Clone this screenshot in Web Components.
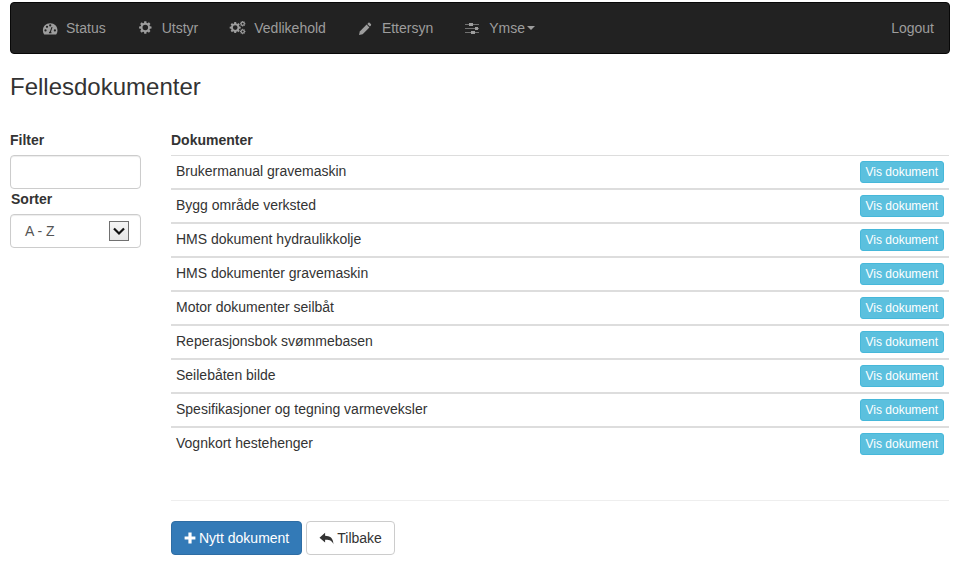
<!DOCTYPE html>
<html>
<head>
<meta charset="utf-8">
<title>Fellesdokumenter</title>
<style>
  html, body { margin: 0; padding: 0; background: #fff; }
  body { font-family: "Liberation Sans", Arial, sans-serif; font-size: 14px; line-height: 20px; color: #333; }
</style>
</head>
<body>
<app-page>
  <top-nav>
    <nav-link icon="dashboard">Status</nav-link>
    <nav-link icon="cog">Utstyr</nav-link>
    <nav-link icon="cogs">Vedlikehold</nav-link>
    <nav-link icon="pencil">Ettersyn</nav-link>
    <nav-link icon="sliders" caret>Ymse</nav-link>
    <nav-link slot="right">Logout</nav-link>
  </top-nav>
  <page-title>Fellesdokumenter</page-title>
  <two-col>
    <filter-panel slot="side"></filter-panel>
    <doc-list>
      <doc-row>Brukermanual gravemaskin</doc-row>
      <doc-row>Bygg område verksted</doc-row>
      <doc-row>HMS dokument hydraulikkolje</doc-row>
      <doc-row>HMS dokumenter gravemaskin</doc-row>
      <doc-row>Motor dokumenter seilbåt</doc-row>
      <doc-row>Reperasjonsbok svømmebasen</doc-row>
      <doc-row>Seilebåten bilde</doc-row>
      <doc-row>Spesifikasjoner og tegning varmeveksler</doc-row>
      <doc-row>Vognkort hestehenger</doc-row>
    </doc-list>
  </two-col>
</app-page>

<script>
// gear outline for the cog icons, r is the outer radius, hole the bore as a share of r
function gearPath(cx, cy, r, hole) {
  let d = '';
  const teeth = 8;
  for (let i = 0; i < teeth; i++) {
    const a = (i / teeth) * Math.PI * 2;
    const w = Math.PI / teeth * 0.55;
    const pts = [[a - w * 1.25, 0.76], [a - w * 0.8, 1], [a + w * 0.8, 1], [a + w * 1.25, 0.76]];
    pts.forEach((p, j) => {
      const x = (cx + Math.cos(p[0]) * p[1] * r).toFixed(2);
      const y = (cy + Math.sin(p[0]) * p[1] * r).toFixed(2);
      d += (i === 0 && j === 0 ? 'M' : 'L') + x + ' ' + y;
    });
  }
  d += 'Z';
  const h = r * hole;
  d += `M${cx - h} ${cy}a${h} ${h} 0 1 0 ${h * 2} 0a${h} ${h} 0 1 0 ${-h * 2} 0Z`;
  return d;
}

// nav icons share a 26x14 box, drawn where the glyph sits in front of the label
const navIcon = inner => `<svg width="26" height="14" viewBox="0 0 26 14" fill="currentColor">${inner}</svg>`;

const ICONS = {
  dashboard: navIcon(`<path transform="translate(2.200 1)" fill-rule="evenodd" d="M8 1.200C3.800 1.200.7 4.300.7 8.400c0 1.500.4 2.700 1.100 3.800.2.300.5.400.8.400h10.800c.3 0 .6-.1.800-.4.700-1.100 1.100-2.300 1.100-3.800 0-4.100-3.100-7.200-7.300-7.200zM3.300 9.500a1.100 1.100 0 1 1 0-2.200 1.100 1.100 0 0 1 0 2.200zm1.500-3.600a1.100 1.100 0 1 1 0-2.200 1.100 1.100 0 0 1 0 2.200zM8 4.500A1.100 1.100 0 1 1 8 2.300a1.100 1.100 0 0 1 0 2.200zm1.300 6.800H6.700c0-.9.500-1.500 1-1.700l1.500-4.300c.1-.3.400-.4.700-.3.300.1.400.4.300.7L8.800 9.600c.3.300.5.900.5 1.700zm3.400-1.800a1.100 1.100 0 1 1 0-2.200 1.100 1.100 0 0 1 0 2.200z"/>`),
  cog: navIcon(`<path fill-rule="evenodd" d="${gearPath(9.3, 6.5, 6.3, 0.44)}"/>`),
  cogs: navIcon(`<path fill-rule="evenodd" d="${gearPath(7.200, 6.600, 5.600, 0.42)}${gearPath(14.700, 2.700, 2.800, 0.36)}${gearPath(14.700, 10.500, 2.800, 0.36)}"/>`),
  pencil: navIcon(`<path d="M3 14l.8-3.600L10.600 3.600l2.800 2.800L6.600 13.200z"/><path d="M11.300 2.900l1-1c.4-.4 1-.4 1.400 0l1.200 1.200c.4.400.4 1 0 1.400l-1 1z"/>`),
  sliders: navIcon(`<path opacity=".65" d="M2 3h14v1H2zM2 7h14v1H2zM2 11h14v1H2z"/><path d="M6 2h4v3H6zM12 6h3v3h-3zM8 10h4v3H8z"/>`),
  plus: `<svg width="12" height="12" viewBox="0 0 12 12"><path fill="currentColor" d="M4.400.6h3.200v3.800h3.800v3.200H7.600v3.800H4.400V7.600H.6V4.400h3.800z"/></svg>`,
  share: `<svg width="15" height="13" viewBox="0 0 15 13"><path fill="currentColor" d="M6.100.8v2.900c4.700.1 8.200 2 8.300 8.500-1.200-3.400-3.500-4.600-8.300-4.500v2.900L.5 5.700z"/></svg>`
};

function define(name, html) {
  customElements.define(name, class extends HTMLElement {
    connectedCallback() {
      if (this.shadowRoot) return;
      const shadow = this.attachShadow({ mode: 'open' });
      shadow.innerHTML = typeof html === 'function' ? html(this) : html;
    }
  });
}

define('app-page', `
  <style>
    :host { display: block; padding: 2px 15px 0 10px; }
  </style>
  <slot></slot>
`);

define('top-nav', `
  <style>
    :host {
      display: flex;
      justify-content: space-between;
      height: 50px;
      background: #222;
      border: 1px solid #080808;
      border-radius: 4px;
      padding: 0 0 0 14px;
    }
    .left, .right { display: flex; }
  </style>
  <div class="left"><slot></slot></div>
  <div class="right"><slot name="right"></slot></div>
`);

define('nav-link', el => `
  <style>
    :host {
      display: flex;
      align-items: center;
      padding: 0 15px;
      color: #9d9d9d;
      font-size: 14px;
      white-space: nowrap;
    }
    .ic { display: flex; width: 26px; }
    .caret {
      width: 0; height: 0; margin-left: 2px;
      border-top: 4px solid #9d9d9d;
      border-left: 4px solid transparent;
      border-right: 4px solid transparent;
    }
  </style>
  ${el.getAttribute('icon') ? `<span class="ic">${ICONS[el.getAttribute('icon')]}</span>` : ''}
  <slot></slot>
  ${el.hasAttribute('caret') ? '<span class="caret"></span>' : ''}
`);

define('page-title', `
  <style>
    :host {
      display: block;
      margin-top: 20px;
      font-size: 24px;
      line-height: 26px;
      font-weight: 500;
      color: #333;
    }
  </style>
  <slot></slot>
`);

define('two-col', `
  <style>
    :host { display: flex; gap: 30px; margin-top: 30px; }
    .side { width: 131px; flex: none; }
    .main { flex: 1; min-width: 0; margin-right: 1px; }
  </style>
  <div class="side"><slot name="side"></slot></div>
  <div class="main"><slot></slot></div>
`);

define('filter-panel', `
  <style>
    :host { display: block; }
    label { display: block; font-weight: 700; line-height: 20px; }
    input {
      display: block; box-sizing: border-box; width: 100%; height: 34px;
      margin: 5px 0 0; padding: 6px 12px;
      border: 1px solid #ccc; border-radius: 4px; background: #fff;
      box-shadow: inset 0 1px 1px rgba(0,0,0,.075);
      font: inherit; color: #555; outline: none;
    }
    .sort { margin: 0 0 5px 1px; }
    .select {
      box-sizing: border-box; height: 34px;
      display: flex; align-items: center; justify-content: space-between;
      padding: 0 11px 0 14px;
      border: 1px solid #ccc; border-radius: 4px; background: #fff;
      color: #555;
      box-shadow: inset 0 1px 1px rgba(0,0,0,.075);
    }
    .arrow {
      box-sizing: border-box; width: 20px; height: 20px;
      display: flex; align-items: center; justify-content: center;
      border: 1px solid #707070; background: linear-gradient(#f4f4f4, #e6e6e6);
    }
  </style>
  <label>Filter</label>
  <input type="text" aria-label="Filter">
  <label class="sort">Sorter</label>
  <div class="select">
    <span>A - Z</span>
    <span class="arrow"><svg width="12" height="9" viewBox="0 0 12 9"><path fill="none" stroke="#111" stroke-width="2.200" d="M1 1.500l5 5 5-5"/></svg></span>
  </div>
`);

define('doc-list', `
  <style>
    :host { display: block; }
    .head { font-weight: 700; line-height: 20px; padding-bottom: 5px; border-bottom: 1px solid #ddd; }
    hr { border: 0; border-top: 1px solid #eee; margin: 38px 0 20px; }
    .actions { display: flex; gap: 4px; }
    .btn {
      box-sizing: border-box; height: 34px; display: inline-flex; align-items: center;
      padding: 0 12px; border: 1px solid transparent; border-radius: 4px;
      font-size: 14px; white-space: nowrap;
    }
    .btn svg { margin-right: 3px; }
    .primary { background: #337ab7; border-color: #2e6da4; color: #fff; }
    .plain { background: #fff; border-color: #ccc; color: #333; }
  </style>
  <div class="head">Dokumenter</div>
  <slot></slot>
  <hr>
  <div class="actions">
    <span class="btn primary">${ICONS.plus}Nytt dokument</span>
    <span class="btn plain">${ICONS.share}Tilbake</span>
  </div>
`);

define('doc-row', `
  <style>
    :host {
      display: flex; align-items: center; justify-content: space-between;
      box-sizing: border-box; height: 34px;
      padding: 0 5px;
      border-bottom: 2px solid #ddd;
    }
    :host(:last-child) { border-bottom-color: transparent; }
    .name { padding-bottom: 2px; }
    .btn {
      box-sizing: border-box; height: 22px; display: inline-flex; align-items: center;
      padding: 0 5px; border: 1px solid #46b8da; border-radius: 3px;
      background: #5bc0de; color: #fff; font-size: 12px; line-height: 18px; white-space: nowrap;
    }
  </style>
  <span class="name"><slot></slot></span>
  <span class="btn">Vis dokument</span>
`);
</script>
</body>
</html>
